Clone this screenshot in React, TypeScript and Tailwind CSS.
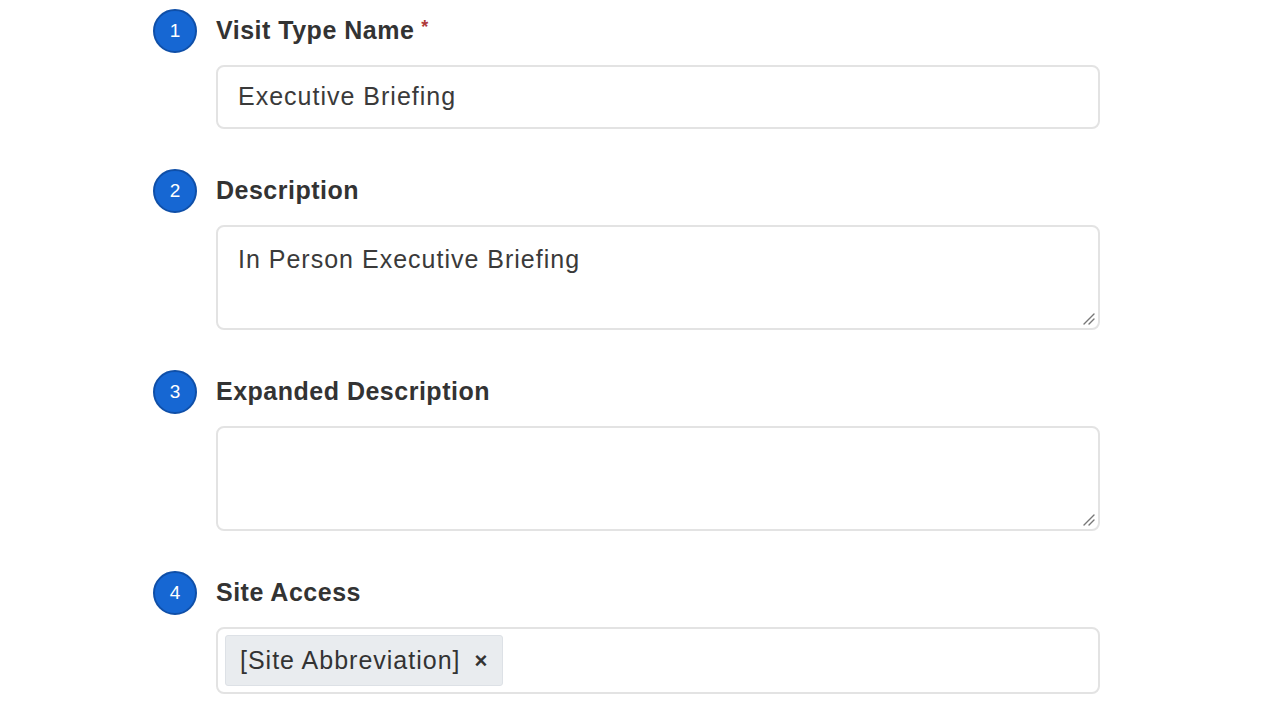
import React from 'react'

function StepBadge({ n }: { n: number }) {
  return (
    <div className="flex h-[44px] w-[44px] shrink-0 items-center justify-center rounded-full border-2 border-[#0f4fa8] bg-[#1667d3] text-[19px] text-white">
      {n}
    </div>
  )
}

function ResizeGrip() {
  return (
    <svg className="absolute bottom-[3px] right-[3px] h-[14px] w-[14px]" viewBox="0 0 14 14">
      <path d="M13 3L3 13M13 8L8 13" stroke="#777" strokeWidth="1.4" strokeLinecap="round" />
    </svg>
  )
}

function Field({ n, label, required, children }: { n: number; label: string; required?: boolean; children: React.ReactNode }) {
  return (
    <div className="flex gap-[19px]">
      <StepBadge n={n} />
      <div className="flex w-[884px] flex-col">
        <div className="flex h-[44px] items-center text-[25px] font-bold tracking-[0.5px] text-[#333]">
          {label}
          {required && <span className="ml-[7px] -mt-[8px] text-[18px] text-[#b03a3a]">*</span>}
        </div>
        <div className="mt-[12px]">{children}</div>
      </div>
    </div>
  )
}

export default function App() {
  return (
    <div className="min-h-[720px] w-[1280px] bg-white font-['Liberation_Sans',Arial,sans-serif]">
      <div className="flex flex-col gap-[40px] pl-[153px] pt-[9px]">
        <Field n={1} label="Visit Type Name" required>
          <div className="flex h-[64px] items-center rounded-[8px] border-2 border-[#e3e3e3] px-[20px] text-[25px] tracking-[1px] text-[#3a3a3a]">
            Executive Briefing
          </div>
        </Field>

        <Field n={2} label="Description">
          <div className="relative h-[105px] rounded-[8px] border-2 border-[#e3e3e3] px-[20px] pt-[14px] text-[25px] tracking-[1px] text-[#3a3a3a]">
            In Person Executive Briefing
            <ResizeGrip />
          </div>
        </Field>

        <Field n={3} label="Expanded Description">
          <div className="relative h-[105px] rounded-[8px] border-2 border-[#e3e3e3]">
            <ResizeGrip />
          </div>
        </Field>

        <Field n={4} label="Site Access">
          <div className="flex h-[67px] items-center rounded-[8px] border-2 border-[#e3e3e3] px-[7px]">
            <div className="flex h-[51px] items-center gap-[14px] rounded-[3px] border border-[#dde1e6] bg-[#e9ecef] pl-[14px] pr-[14px] text-[25px] tracking-[1px] text-[#333]">
              <span>[Site Abbreviation]</span>
              <span className="text-[22px] font-bold text-[#333]">×</span>
            </div>
          </div>
        </Field>
      </div>
    </div>
  )
}
